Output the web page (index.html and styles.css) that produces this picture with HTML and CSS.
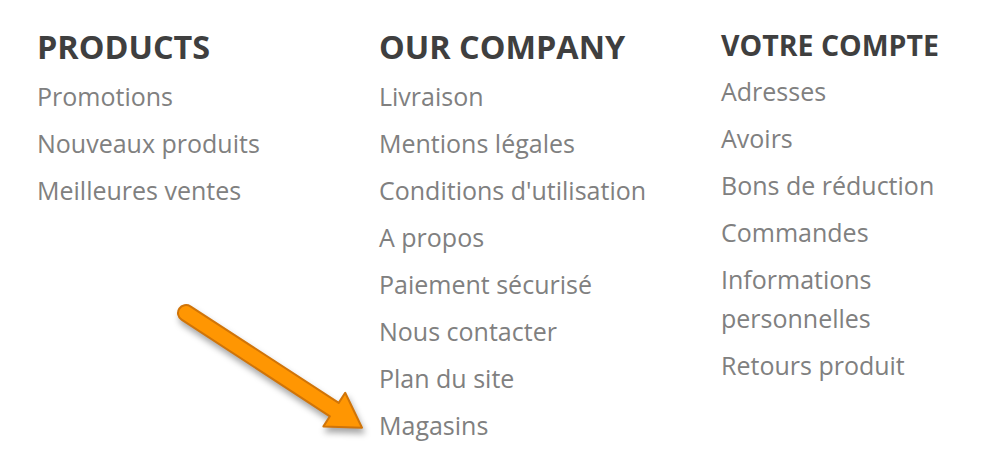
FILE: index.html
```html
<!DOCTYPE html>
<html lang="fr">
<head>
    <meta charset="UTF-8">
    <meta name="viewport" content="width=device-width, initial-scale=1.0">
    <title>Footer links</title>
    <link rel="stylesheet" href="styles.css">
</head>
<body>
    <footer class="footer">
        <div class="footer-col">
            <h3 class="footer-title">Products</h3>
            <ul class="footer-links">
                <li><a href="#">Promotions</a></li>
                <li><a href="#">Nouveaux produits</a></li>
                <li><a href="#">Meilleures ventes</a></li>
            </ul>
        </div>
        <div class="footer-col">
            <h3 class="footer-title">Our company</h3>
            <ul class="footer-links">
                <li><a href="#">Livraison</a></li>
                <li><a href="#">Mentions légales</a></li>
                <li><a href="#">Conditions d'utilisation</a></li>
                <li><a href="#">A propos</a></li>
                <li><a href="#">Paiement sécurisé</a></li>
                <li><a href="#">Nous contacter</a></li>
                <li><a href="#">Plan du site</a></li>
                <li><a href="#">Magasins</a></li>
            </ul>
        </div>
        <div class="footer-col account">
            <h3 class="footer-title">Votre compte</h3>
            <ul class="footer-links">
                <li><a href="#">Adresses</a></li>
                <li><a href="#">Avoirs</a></li>
                <li><a href="#">Bons de réduction</a></li>
                <li><a href="#">Commandes</a></li>
                <li><a href="#">Informations personnelles</a></li>
                <li><a href="#">Retours produit</a></li>
            </ul>
        </div>
    </footer>

    <!-- annotation arrow pointing at "Magasins" -->
    <svg class="arrow" width="998" height="474" viewBox="0 0 998 474">
        <path d="M190.4 306.3 L338.7 402.9 L345.2 392.8 L362 427.7 L323.4 426.4 L329.9 416.3 L181.6 319.7 A8 8 0 0 1 190.4 306.3 Z"
              fill="#ff9602" stroke="#d07408" stroke-width="2" stroke-linejoin="round"/>
    </svg>
</body>
</html>
```

FILE: styles.css
```css
body {
    font-family: 'Open Sans', sans-serif;
    background-color: #ffffff;
    margin: 0;
}
.footer {
    display: grid;
    grid-template-columns: 342px 342px 1fr;
    padding: 27px 0 0 37px;
}
.footer-title {
    margin: 0 0 12px;
    font-size: 32.4px;
    line-height: 38px;
    font-weight: 700;
    text-transform: uppercase;
    color: #3f3f3f;
}
.account .footer-title {
    margin: 2px 0 11px;
    font-size: 28.5px;
    line-height: 32px;
}
.footer-links {
    list-style: none;
    margin: 0;
    padding: 0;
}
.footer-links li {
    margin-bottom: 8px;
    font-size: 25px;
    line-height: 39px;
}
.footer-links a {
    color: #808080;
    text-decoration: none;
}
.account .footer-links {
    width: 250px;
}
.arrow {
    position: absolute;
    top: 0;
    left: 0;
    pointer-events: none;
    filter: drop-shadow(2px 5px 3px rgba(0, 0, 0, 0.35));
}
```
